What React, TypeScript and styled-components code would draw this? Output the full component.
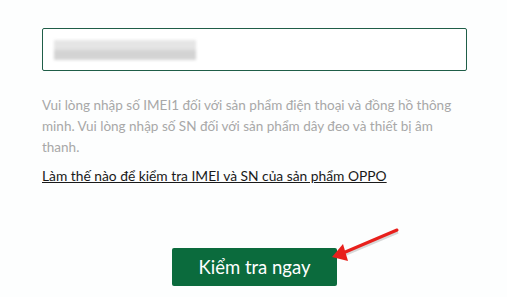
import React, { FC } from "react"
import styled, { createGlobalStyle } from "styled-components"

const GlobalStyle = createGlobalStyle`
  body {
    margin: 0;
    background: #fdfefe;
    font-family: Lato, "Noto Sans", sans-serif;
  }
`

const Page = styled.div`
  position: relative;
  width: 507px;
  height: 297px;
  overflow: hidden;
  padding: 28px 0 0 42px;
  box-sizing: border-box;
`

const Form = styled.div`
  width: 425px;
  display: flex;
  flex-direction: column;
`

const InputBox = styled.div`
  height: 43px;
  box-sizing: border-box;
  border: 1px solid #1f5e48;
  border-radius: 2px;
  background: #fff;
  display: flex;
  align-items: center;
  padding-left: 11px;
`

const Blurred = styled.div`
  width: 142px;
  height: 20px;
  filter: blur(1.5px);
  background: linear-gradient(to bottom, #e6e6e6 0%, #e4e4e4 45%, #d2d2d2 55%, #d4d4d4 100%);
`

const Hint = styled.p`
  margin: 24px 0 0;
  font-size: 13.5px;
  line-height: 21px;
  color: #a8a8a8;
`

const HowTo = styled.a`
  margin-top: 9px;
  font-size: 13.8px;
  line-height: 18px;
  color: #1a1a1a;
  text-decoration: underline;
  align-self: flex-start;
`

const Actions = styled.div`
  display: flex;
  justify-content: center;
  margin-top: 63px;
`

const CheckButton = styled.button`
  width: 165px;
  height: 38px;
  border: none;
  border-radius: 2px;
  background: #0b6b3d;
  color: #fff;
  font-family: Lato, "Noto Sans", sans-serif;
  font-size: 18.5px;
  cursor: pointer;
`

const Arrow = styled.svg`
  position: absolute;
  left: 325px;
  top: 222px;
  overflow: visible;
`

const App: FC = () => (
  <Page>
    <GlobalStyle />
    <Form>
      <InputBox>
        <Blurred />
      </InputBox>
      <Hint>
        Vui lòng nhập số IMEI1 đối với sản phẩm điện thoại và đồng hồ thông minh. Vui lòng nhập số SN đối với sản phẩm dây đeo và thiết bị âm thanh.
      </Hint>
      <HowTo href="#">Làm thế nào để kiểm tra IMEI và SN của sản phẩm OPPO</HowTo>
      <Actions>
        <CheckButton>Kiểm tra ngay</CheckButton>
      </Actions>
    </Form>
    <Arrow width="80" height="45" viewBox="0 0 80 45">
      <line x1="72" y1="8" x2="20" y2="30" stroke="rgba(0,0,0,0.15)" strokeWidth="3" transform="translate(1,2)" />
      <line x1="72" y1="8" x2="18" y2="31" stroke="#e8201c" strokeWidth="3" strokeLinecap="round" />
      <polygon points="7,35 18,22 23,39" fill="#e8201c" />
    </Arrow>
  </Page>
)

export default App
